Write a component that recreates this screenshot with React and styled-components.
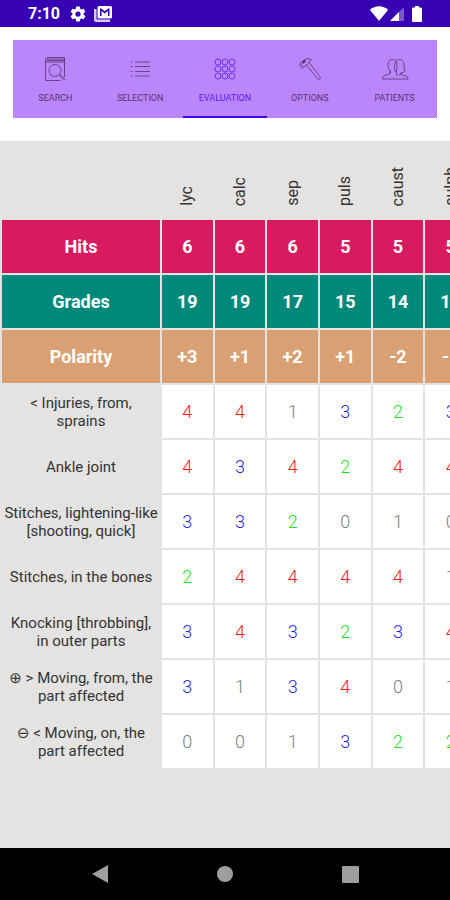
import React, { useState } from 'react';
import styled, { createGlobalStyle } from 'styled-components';

const remedies = ['lyc', 'calc', 'sep', 'puls', 'caust', 'sulph'];

const totals = [
  { name: 'Hits', color: '#d81b60', values: ['6', '6', '6', '5', '5', '5'] },
  { name: 'Grades', color: '#00897b', values: ['19', '19', '17', '15', '14', '13'] },
  { name: 'Polarity', color: '#d9a173', values: ['+3', '+1', '+2', '+1', '-2', '-1'] },
];

const symptoms = [
  { name: '< Injuries, from,\nsprains', grades: [4, 4, 1, 3, 2, 3] },
  { name: 'Ankle joint', grades: [4, 3, 4, 2, 4, 4] },
  { name: 'Stitches, lightening-like\n[shooting, quick]', grades: [3, 3, 2, 0, 1, 0] },
  { name: 'Stitches, in the bones', grades: [2, 4, 4, 4, 4, 1] },
  { name: 'Knocking [throbbing],\nin outer parts', grades: [3, 4, 3, 2, 3, 4] },
  { name: '⊕ > Moving, from, the\npart affected', grades: [3, 1, 3, 4, 0, 1] },
  { name: '⊖ < Moving, on, the\npart affected', grades: [0, 0, 1, 3, 2, 2] },
];

const gradeColors = ['#808080', '#808080', '#22e022', '#2a1fe0', '#ee1c1c'];

const tabs = [
  { name: 'SEARCH', Icon: SearchIcon },
  { name: 'SELECTION', Icon: ListIcon },
  { name: 'EVALUATION', Icon: GridIcon },
  { name: 'OPTIONS', Icon: HammerIcon },
  { name: 'PATIENTS', Icon: PeopleIcon },
];

function SearchIcon() {
  return (
    <TabIcon viewBox="0 0 24 24">
      <path d="M2.500 5V1.500L3.500.5h18V20M2.500 5h19M2.500 5v18.500h15M3.500 2h18M3.500 3.500h18" />
      <circle cx="12" cy="13.5" r="6" />
      <path d="M16 18l5.500 5.500M17.500 17.500l5 5.500" />
    </TabIcon>
  );
}

function ListIcon() {
  return (
    <TabIcon viewBox="0 0 24 24">
      <path d="M7 5h15M7 9.500h15M7 14.500h15M7 19h15" />
      <path d="M2.500 5h2M2.500 9.500h2M2.500 14.500h2M2.500 19h2" />
    </TabIcon>
  );
}

function GridIcon() {
  return (
    <TabIcon viewBox="0 0 24 24">
      {[5, 12, 19].map((y) =>
        [5, 12, 19].map((x) => <circle key={`${x}-${y}`} cx={x} cy={y} r="3" />)
      )}
    </TabIcon>
  );
}

function HammerIcon() {
  return (
    <TabIcon viewBox="0 0 24 24">
      <path d="M1.500 7.500L4 4.500l4-2.500 4-.5 1.500 1.500-1.500.5-1 2.500-5.500 4.500-1.500 1z" />
      <path d="M2.500 6.500l3 3.500" />
      <path d="M8.500 8.200L20.500 22.500q2-.2 2-2.200L11.200 5.600" />
      <path d="M4 5l3-2 .5 1.500L5 6.500z" fill="currentColor" />
    </TabIcon>
  );
}

function PeopleIcon() {
  return (
    <TabIcon $wide viewBox="0 0 28 24">
      <path d="M1.500 22v-2c1-2 5-2 7.500-3.500v-3C7.500 12 6.800 9 7 7c.3-3 2-4.500 4.500-4.500 1.500 0 3 .7 3.500 1.800" />
      <path d="M9 13.500V17" />
      <path d="M15 4.300C16 3 17.300 2.500 18.500 2.500c3 0 4.300 2.500 4.500 5.500.1 2.500.3 4.500 1 6.500-1 .8-2.300 1-3.500 1v2c1.500 1.500 5.500 1 6.500 3V22H1.500" />
      <path d="M15 4.300c-1.500 2-1.200 5-1.700 9.200l2.200 1.500v2.500l2 1 2.500-1.500v-1.500M15 4.300c1.300 2 1.500 4.500.7 7.200l-.2 3.500" />
    </TabIcon>
  );
}

function App() {
  const [tab, setTab] = useState('EVALUATION');

  return (
    <>
      <GlobalStyle />
      <Page>
        <StatusBar>
          <StatusGroup>
            <Clock>7:10</Clock>
            <StatusIcon $width="18" $height="18" viewBox="0 0 24 24">
              <path d="M19.430 12.980c.04-.32.07-.64.07-.98s-.03-.66-.07-.98l2.110-1.650c.19-.15.24-.42.12-.64l-2-3.460c-.12-.22-.39-.3-.61-.22l-2.490 1c-.52-.4-1.080-.73-1.690-.98l-.38-2.650A.488.488 0 0 0 14 2h-4c-.25 0-.46.18-.49.42l-.38 2.650c-.61.25-1.170.59-1.690.98l-2.490-1c-.23-.09-.49 0-.61.22l-2 3.460c-.13.22-.07.49.12.64l2.110 1.650c-.04.32-.07.65-.07.98s.03.66.07.98l-2.110 1.650c-.19.15-.24.42-.12.64l2 3.460c.12.22.39.3.61.22l2.490-1c.52.4 1.080.73 1.690.98l.38 2.650c.03.24.24.42.49.42h4c.25 0 .46-.18.49-.42l.38-2.650c.61-.25 1.170-.59 1.690-.98l2.490 1c.23.09.49 0 .61-.22l2-3.460c.12-.22.07-.49-.12-.64zM12 15.500a3.500 3.500 0 1 1 0-7 3.500 3.500 0 0 1 0 7z" />
            </StatusIcon>
            <StatusIcon $width="18" $height="16" viewBox="0 0 18 16">
              <path d="M5 0h11.500Q18 0 18 1.500v9.500q0 1.500-1.500 1.500H5Q3.500 12.500 3.500 11V1.500Q3.500 0 5 0zM6 2.500V10h1.500V5l3.200 2.500L14 5v5h1.500V2.500h-1.300l-3.500 2.800-3.400-2.800z" fillRule="evenodd" />
              <path d="M0 3h2.500v9.500q0 1 1 1H16V16H2q-2 0-2-2z" opacity="0.8" />
            </StatusIcon>
          </StatusGroup>
          <StatusGroup $tight>
            <StatusIcon $width="18" $height="15" viewBox="0 0 18 15">
              <path d="M9 15L0 4C4.500-1 13.500-1 18 4z" />
            </StatusIcon>
            <StatusIcon $width="14" $height="14" viewBox="0 0 14 14">
              <path d="M14 0v14H0z" opacity="0.35" />
              <path d="M9 5v9H0z" />
            </StatusIcon>
            <BatteryIcon $width="10" $height="16" viewBox="0 0 10 16">
              <path d="M3 0h4v1.500h2q1 0 1 1V15q0 1-1 1H1q-1 0-1-1V2.500q0-1 1-1h2z" />
            </BatteryIcon>
          </StatusGroup>
        </StatusBar>

        <TabBar role="tablist">
          {tabs.map(({ name, Icon }) => (
            <Tab
              key={name}
              role="tab"
              aria-selected={tab === name}
              $active={tab === name}
              onClick={() => setTab(name)}
            >
              <Icon />
              {name}
            </Tab>
          ))}
        </TabBar>

        <Content>
          <Table>
            <thead>
              <tr>
                <Corner />
                {remedies.map((remedy) => (
                  <RemedyHead key={remedy} scope="col">
                    <Vertical>{remedy}</Vertical>
                  </RemedyHead>
                ))}
              </tr>
            </thead>
            <tbody>
              {totals.map((row) => (
                <TotalRow key={row.name} $color={row.color}>
                  <th scope="row">{row.name}</th>
                  {row.values.map((value, i) => (
                    <td key={remedies[i]}>{value}</td>
                  ))}
                </TotalRow>
              ))}
              {symptoms.map((row) => (
                <tr key={row.name}>
                  <SymptomName scope="row">{row.name}</SymptomName>
                  {row.grades.map((grade, i) => (
                    <Grade key={remedies[i]} $grade={grade}>
                      {grade}
                    </Grade>
                  ))}
                </tr>
              ))}
            </tbody>
          </Table>
        </Content>

        <NavBar>
          <NavButton aria-label="Back">
            <svg width="18" height="20" viewBox="0 0 18 20">
              <path d="M17 1v18L1 10z" />
            </svg>
          </NavButton>
          <NavButton aria-label="Home">
            <svg width="18" height="18" viewBox="0 0 18 18">
              <circle cx="9" cy="9" r="8" />
            </svg>
          </NavButton>
          <NavButton aria-label="Recent apps">
            <svg width="18" height="18" viewBox="0 0 18 18">
              <rect x="1" y="1" width="17" height="17" rx="1" />
            </svg>
          </NavButton>
        </NavBar>
      </Page>
    </>
  );
}

const GlobalStyle = createGlobalStyle`
  * {
    box-sizing: border-box;
  }

  body {
    margin: 0;
    background-color: white;
    font-family: Roboto, 'Noto Sans', 'DejaVu Sans', sans-serif;
  }

  button {
    border: none;
    padding: 0;
    background: none;
    font-family: inherit;
  }
`;

const Page = styled.div`
  display: flex;
  flex-direction: column;
  min-height: 100vh;
`;

const StatusBar = styled.header`
  display: flex;
  justify-content: space-between;
  align-items: center;
  height: 27px;
  padding: 0 28px;
  background-color: #3700b3;
  color: white;
`;

const StatusGroup = styled.div`
  display: flex;
  align-items: center;
  gap: ${(props) => (props.$tight ? '2px' : '7px')};
`;

const Clock = styled.span`
  margin-right: 2px;
  font-size: 16px;
  line-height: 18px;
  font-weight: 700;
`;

const StatusIcon = styled.svg`
  width: ${(props) => props.$width}px;
  height: ${(props) => props.$height}px;
  fill: currentColor;
`;

const BatteryIcon = styled(StatusIcon)`
  margin-left: 6px;
`;

const TabBar = styled.nav`
  display: flex;
  height: 78px;
  margin: 13px 13px 23px;
  background-color: #bb86fc;
`;

const Tab = styled.button`
  flex: 1;
  display: flex;
  flex-direction: column;
  align-items: center;
  gap: 12px;
  padding-top: 17px;
  border-bottom: 2px solid ${(props) => (props.$active ? '#3a0ae0' : 'transparent')};
  color: ${(props) => (props.$active ? '#5a1cf0' : '#553570')};
  font-size: 9px;
  line-height: 10px;
`;

const TabIcon = styled.svg`
  width: ${(props) => (props.$wide ? 28 : 24)}px;
  height: 24px;
  fill: none;
  stroke: currentColor;
  stroke-width: 0.8;
`;

const Content = styled.main`
  flex: 1;
  overflow-x: auto;
  scrollbar-width: none;
  background-color: #e4e3e1;
`;

/* wider than the screen, the last remedy is reached by scrolling */
const Table = styled.table`
  width: calc(100% + 28px);
  table-layout: fixed;
  border-spacing: 2px;
  text-align: center;
  color: #333333;

  th,
  td {
    height: 53px;
    padding: 0;
  }
`;

const Corner = styled.td`
  width: 158px;
`;

const RemedyHead = styled.th`
  && {
    height: 75px;
    padding-bottom: 12px;
  }
  vertical-align: bottom;
  font-size: 16px;
  font-weight: 400;
`;

const Vertical = styled.span`
  display: inline-block;
  vertical-align: bottom;
  writing-mode: vertical-rl;
  transform: rotate(180deg);
  line-height: 18px;
`;

const TotalRow = styled.tr`
  color: white;
  font-size: 18px;
  font-weight: 700;

  th,
  td {
    background-color: ${(props) => props.$color};
  }
`;

const SymptomName = styled.th`
  font-size: 15px;
  font-weight: 400;
  line-height: 18px;
  white-space: pre-line;
`;

const Grade = styled.td`
  background-color: white;
  color: ${(props) => gradeColors[props.$grade]};
  font-size: 18px;
  font-weight: 300;
`;

const NavBar = styled.footer`
  display: flex;
  justify-content: space-around;
  align-items: center;
  height: 52px;
  padding: 0 37px;
  background-color: black;
`;

const NavButton = styled.button`
  display: flex;
  justify-content: center;
  align-items: center;
  flex: 1;
  height: 100%;

  svg {
    fill: #9e9e9e;
  }
`;

export default App;
